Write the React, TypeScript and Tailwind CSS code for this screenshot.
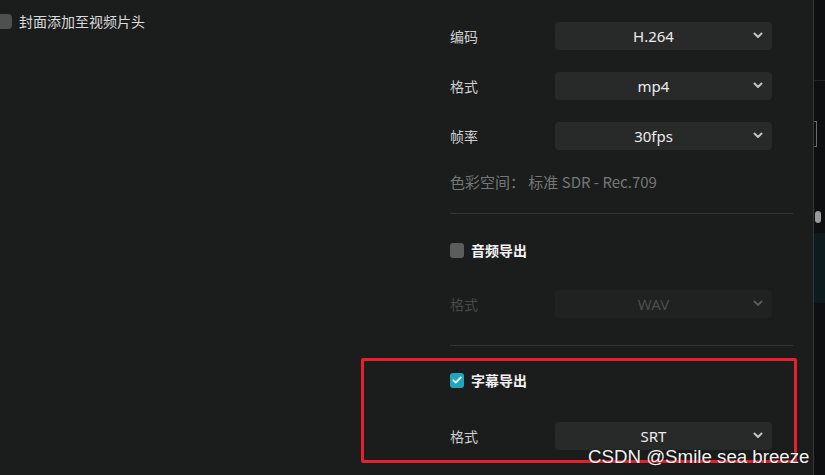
import { ReactNode } from "react";

const cjk = "font-['Noto_Sans_CJK_SC','Noto_Sans',sans-serif]";

function Chevron({ dim }: { dim?: boolean }) {
  return (
    <svg
      width="10"
      height="7"
      viewBox="0 0 10 7"
      className={dim ? "text-[#5a5a5a]" : "text-[#c4c4c4]"}
    >
      <path
        d="M1.5 1.5 L5 5 L8.5 1.5"
        fill="none"
        stroke="currentColor"
        strokeWidth="2"
        strokeLinecap="round"
        strokeLinejoin="round"
      />
    </svg>
  );
}

function Select({ value, dim }: { value: string; dim?: boolean }) {
  return (
    <div
      className={`relative w-[217px] h-[28px] rounded-[4px] flex items-center justify-center pr-[20px] ${
        dim ? "bg-[#202121]" : "bg-[#282929]"
      }`}
    >
      <span
        className={`text-[15px] font-['Noto_Sans','Open_Sans',sans-serif] ${
          dim ? "text-[#4d4e4e]" : "text-[#ececec]"
        }`}
      >
        {value}
      </span>
      <span className="absolute right-[9px] top-[10px] flex">
        <Chevron dim={dim} />
      </span>
    </div>
  );
}

function Row({ label, children, dim }: { label: string; children: ReactNode; dim?: boolean }) {
  return (
    <div className="flex items-center h-[28px]">
      <span
        className={`w-[105px] text-[14px] ${cjk} ${dim ? "text-[#474848]" : "text-[#cfcfcf]"}`}
      >
        {label}
      </span>
      {children}
    </div>
  );
}

function CheckRow({ label, checked }: { label: string; checked?: boolean }) {
  return (
    <div className="flex items-center gap-[7px] h-[20px]">
      <span
        className={`w-[14px] h-[15px] rounded-[3px] flex items-center justify-center ${
          checked ? "bg-[#22a6c0]" : "bg-[#5b5c5c]"
        }`}
      >
        {checked && (
          <svg width="10" height="8" viewBox="0 0 10 8">
            <path
              d="M1.2 4.2 L3.8 6.6 L8.8 1.4"
              fill="none"
              stroke="#ffffff"
              strokeWidth="1.6"
              strokeLinecap="round"
              strokeLinejoin="round"
            />
          </svg>
        )}
      </span>
      <span className={`text-[14px] font-bold text-[#f2f2f2] ${cjk}`}>{label}</span>
    </div>
  );
}

export default function App() {
  return (
    <div className="relative w-[825px] h-[475px] overflow-hidden bg-[#1b1c1c] flex">
      {/* left: cover option */}
      <div className="w-[450px] shrink-0 pt-[11px]">
        <div className="flex items-center gap-[7px] -ml-[3px]">
          <span className="w-[15px] h-[15px] rounded-[4px] bg-[#4e4f4f]" />
          <span className={`text-[14px] text-[#dcdcdc] ${cjk}`}>封面添加至视频片头</span>
        </div>
      </div>

      {/* export settings */}
      <div className="w-[343px] shrink-0 flex flex-col -mt-[28px]">
        <Row label="">
          <Select value="" />
        </Row>
        <div className="mt-[22px]">
          <Row label="编码">
            <Select value="H.264" />
          </Row>
        </div>
        <div className="mt-[22px]">
          <Row label="格式">
            <Select value="mp4" />
          </Row>
        </div>
        <div className="mt-[22px]">
          <Row label="帧率">
            <Select value="30fps" />
          </Row>
        </div>
        <div className={`mt-[22px] h-[20px] leading-[20px] text-[15px] text-[#767777] ${cjk}`}>
          色彩空间： 标准 SDR - Rec.709
        </div>
        <div className="mt-[21px] h-px bg-[#333434]" />

        <div className="mt-[26px]">
          <CheckRow label="音频导出" />
        </div>
        <div className="mt-[30px]">
          <Row label="格式" dim>
            <Select value="WAV" dim />
          </Row>
        </div>
        <div className="mt-[27px] h-px bg-[#333434]" />

        <div className="mt-[24px]">
          <CheckRow label="字幕导出" checked />
        </div>
        <div className="mt-[32px]">
          <Row label="格式">
            <Select value="SRT" />
          </Row>
        </div>
      </div>

      {/* right edge of neighbouring panel */}
      <div className="ml-[20px] flex-1 border-l border-[#353636] bg-[#0e0f10] flex flex-col">
        <div className="h-[80px]" />
        <div className="h-px bg-[#222323]" />
        <div className="mt-[40px] h-[26px] w-[3px] border border-l-0 border-[#6a6a6a]" />
        <div className="mt-[64px] h-[12px] w-[6px] ml-[1px] bg-[#9a9a9a] rounded-sm" />
        <div className="mt-[10px] h-[70px] bg-[#0d1a1e]" />
        <div className="flex-1" />
      </div>

      {/* annotation */}
      <div className="absolute left-[361px] top-[358px] w-[436px] h-[105px] border-[3px] border-[#e8202b] rounded-[2px]" />
      <div className="absolute left-[588px] top-[445px] text-[18.7px] leading-[24px] text-[#f4f4f4] font-['Liberation_Sans',Arial,sans-serif] [text-shadow:0_0_2px_rgba(0,0,0,0.6)]">
        CSDN @Smile sea breeze
      </div>
    </div>
  );
}
